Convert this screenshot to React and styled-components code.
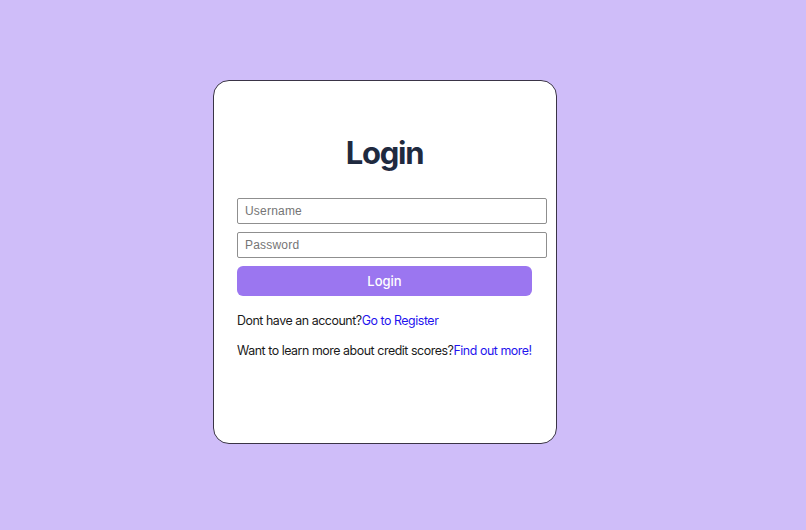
import styled, { createGlobalStyle } from 'styled-components';

const GlobalStyle = createGlobalStyle`
  html, body {
    margin: 0;
    padding: 0;
    background: #cfbdf9;
    font-family: Inter, "Noto Sans", sans-serif;
  }
`

const Page = styled.div`
  width: 806px;
  height: 530px;
  display: flex;
  justify-content: flex-start;
  padding: 80px 0 0 213px;
  box-sizing: border-box;
`

const Card = styled.div`
  width: 344px;
  height: 364px;
  box-sizing: border-box;
  background: #ffffff;
  border: 1px solid #3a3446;
  border-radius: 16px;
  padding: 50px 0 0 23px;
  display: flex;
  flex-direction: column;
`

const Title = styled.h1`
  margin: 0 0 23px 0;
  padding-right: 24px;
  text-align: center;
  font-size: 31px;
  font-weight: 700;
  letter-spacing: -1.3px;
  line-height: 44px;
  color: #1f2a3f;
`

const Input = styled.input`
  width: 310px;
  height: 26px;
  box-sizing: border-box;
  margin-bottom: 8px;
  padding: 0 7px;
  border: 1px solid #8f8f8f;
  border-radius: 2px;
  font-family: "Liberation Sans", Arial, sans-serif;
  font-size: 12px;
  letter-spacing: 0.2px;
  color: #222;
  outline: none;
  &::placeholder {
    color: #757575;
  }
`

const Button = styled.button`
  width: 295px;
  height: 30px;
  border: none;
  border-radius: 6px;
  background: #9b76f0;
  color: #ffffff;
  font-family: Inter, sans-serif;
  font-size: 13px;
  font-weight: 500;
  cursor: pointer;
`

const Line = styled.p`
  margin: ${props => props.first ? '17px' : '15px'} 0 0 0;
  font-size: 12.4px;
  letter-spacing: -0.45px;
  line-height: 15px;
  white-space: nowrap;
  color: #1a1a1a;
`

const Link = styled.a`
  color: #1f13ee;
  text-decoration: none;
`

const App = () => {
  return (
    <Page>
      <GlobalStyle />
      <Card>
        <Title>Login</Title>
        <Input type="text" placeholder="Username" />
        <Input type="password" placeholder="Password" />
        <Button>Login</Button>
        <Line first>Dont have an account?<Link href="#">Go to Register</Link></Line>
        <Line>Want to learn more about credit scores?<Link href="#">Find out more!</Link></Line>
      </Card>
    </Page>
  )
}

export default App
